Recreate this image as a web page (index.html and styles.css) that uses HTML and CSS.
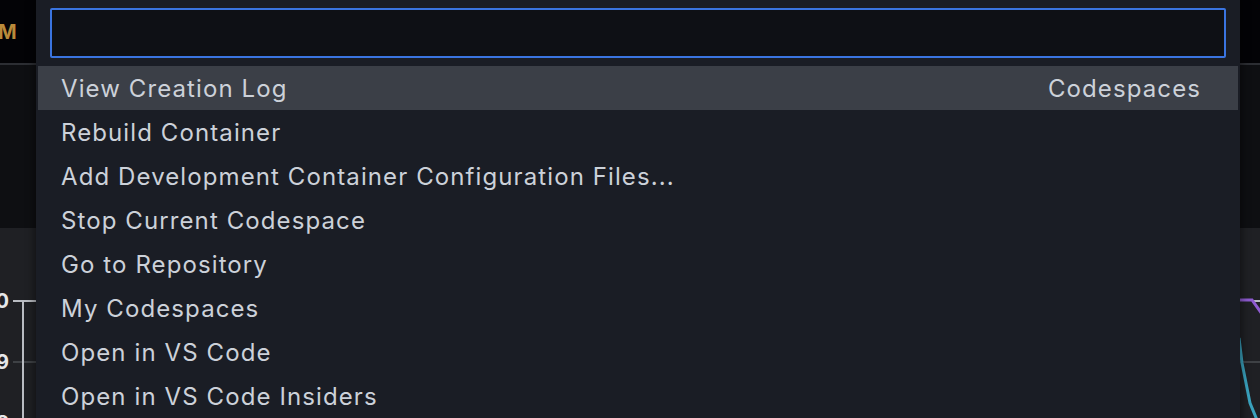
FILE: index.html
```html
<!DOCTYPE html>
<html>
<head>
<meta charset="utf-8">
<link rel="stylesheet" href="styles.css">
</head>
<body>
<div class="page">
  <header class="topbar"><span class="logo">M</span></header>
  <section class="dark"></section>
  <section class="chart">
    <svg class="chart-svg" width="1260" height="190" viewBox="0 0 1260 190">
      <text x="9" y="80" class="lbl" text-anchor="end">10</text>
      <text x="9" y="141" class="lbl" text-anchor="end">9</text>
      <text x="9" y="202" class="lbl" text-anchor="end">8</text>
      <line x1="13" y1="73" x2="36" y2="73" stroke="#b9bcc2" stroke-width="2"/>
      <line x1="13" y1="134" x2="36" y2="134" stroke="#4a4c51" stroke-width="1.5"/>
      <line x1="23" y1="73" x2="23" y2="190" stroke="#b9bcc2" stroke-width="2"/>
      <line x1="1240" y1="134" x2="1260" y2="134" stroke="#4a4c51" stroke-width="1.5"/>
      <line x1="1252" y1="73" x2="1260" y2="73" stroke="#b9bcc2" stroke-width="2"/>
      <polyline points="1236,72 1252,72 1262,86" fill="none" stroke="#8e5bd0" stroke-width="3"/>
      <polyline points="1239,110 1242,135 1250,175 1257,192" fill="none" stroke="#3aa2bd" stroke-width="3"/>
    </svg>
  </section>
</div>
<div class="palette">
  <div class="input-box"></div>
  <ul class="list">
    <li class="item active"><span>View Creation Log</span><span class="cat">Codespaces</span></li>
    <li class="item"><span>Rebuild Container</span></li>
    <li class="item"><span>Add Development Container Configuration Files...</span></li>
    <li class="item"><span>Stop Current Codespace</span></li>
    <li class="item"><span>Go to Repository</span></li>
    <li class="item"><span>My Codespaces</span></li>
    <li class="item"><span>Open in VS Code</span></li>
    <li class="item"><span>Open in VS Code Insiders</span></li>
  </ul>
</div>
</body>
</html>
```
FILE: styles.css
```css
* { box-sizing: border-box; }
html, body { margin: 0; padding: 0; }
body {
  width: 1260px;
  height: 418px;
  overflow: hidden;
  background: #0e0f12;
  font-family: Inter, "Noto Sans", sans-serif;
  position: relative;
}
.page { display: flex; flex-direction: column; height: 418px; }
.topbar {
  height: 65px;
  background: #030306;
  border-bottom: 2px solid #2c2e33;
  display: flex;
  align-items: center;
  flex: none;
}
.logo {
  color: #b98a3a;
  font-weight: 700;
  font-size: 20px;
  margin-left: -2px;
  margin-top: 0;
}
.dark { height: 163px; background: #0e0f12; flex: none; }
.chart { flex: 1; background: #1f2024; position: relative; overflow: hidden; }
.chart-svg { display: block; }
.lbl { fill: #e6e7ea; font: 700 20px Inter, sans-serif; }
.palette {
  position: absolute;
  left: 36px;
  top: 0;
  width: 1204px;
  height: 430px;
  background: #1a1d25;
  padding: 8px 14px 0 14px;
  box-shadow: 0 0 8px 2px rgba(0,0,0,0.45);
}
.input-box {
  height: 50px;
  background: #0e1015;
  border: 2px solid #3a74e0;
  border-radius: 2px;
}
.list { list-style: none; margin: 8px -12px 0 -12px; padding: 0; }
.item {
  height: 44px;
  display: flex;
  align-items: center;
  justify-content: space-between;
  padding: 0 37px 0 23px;
  color: #ccd1d9;
  font-size: 24px;
  letter-spacing: 1.1px;
}
.item.active { background: #3b3f47; }
.cat { color: #ccd1d9; }
```
